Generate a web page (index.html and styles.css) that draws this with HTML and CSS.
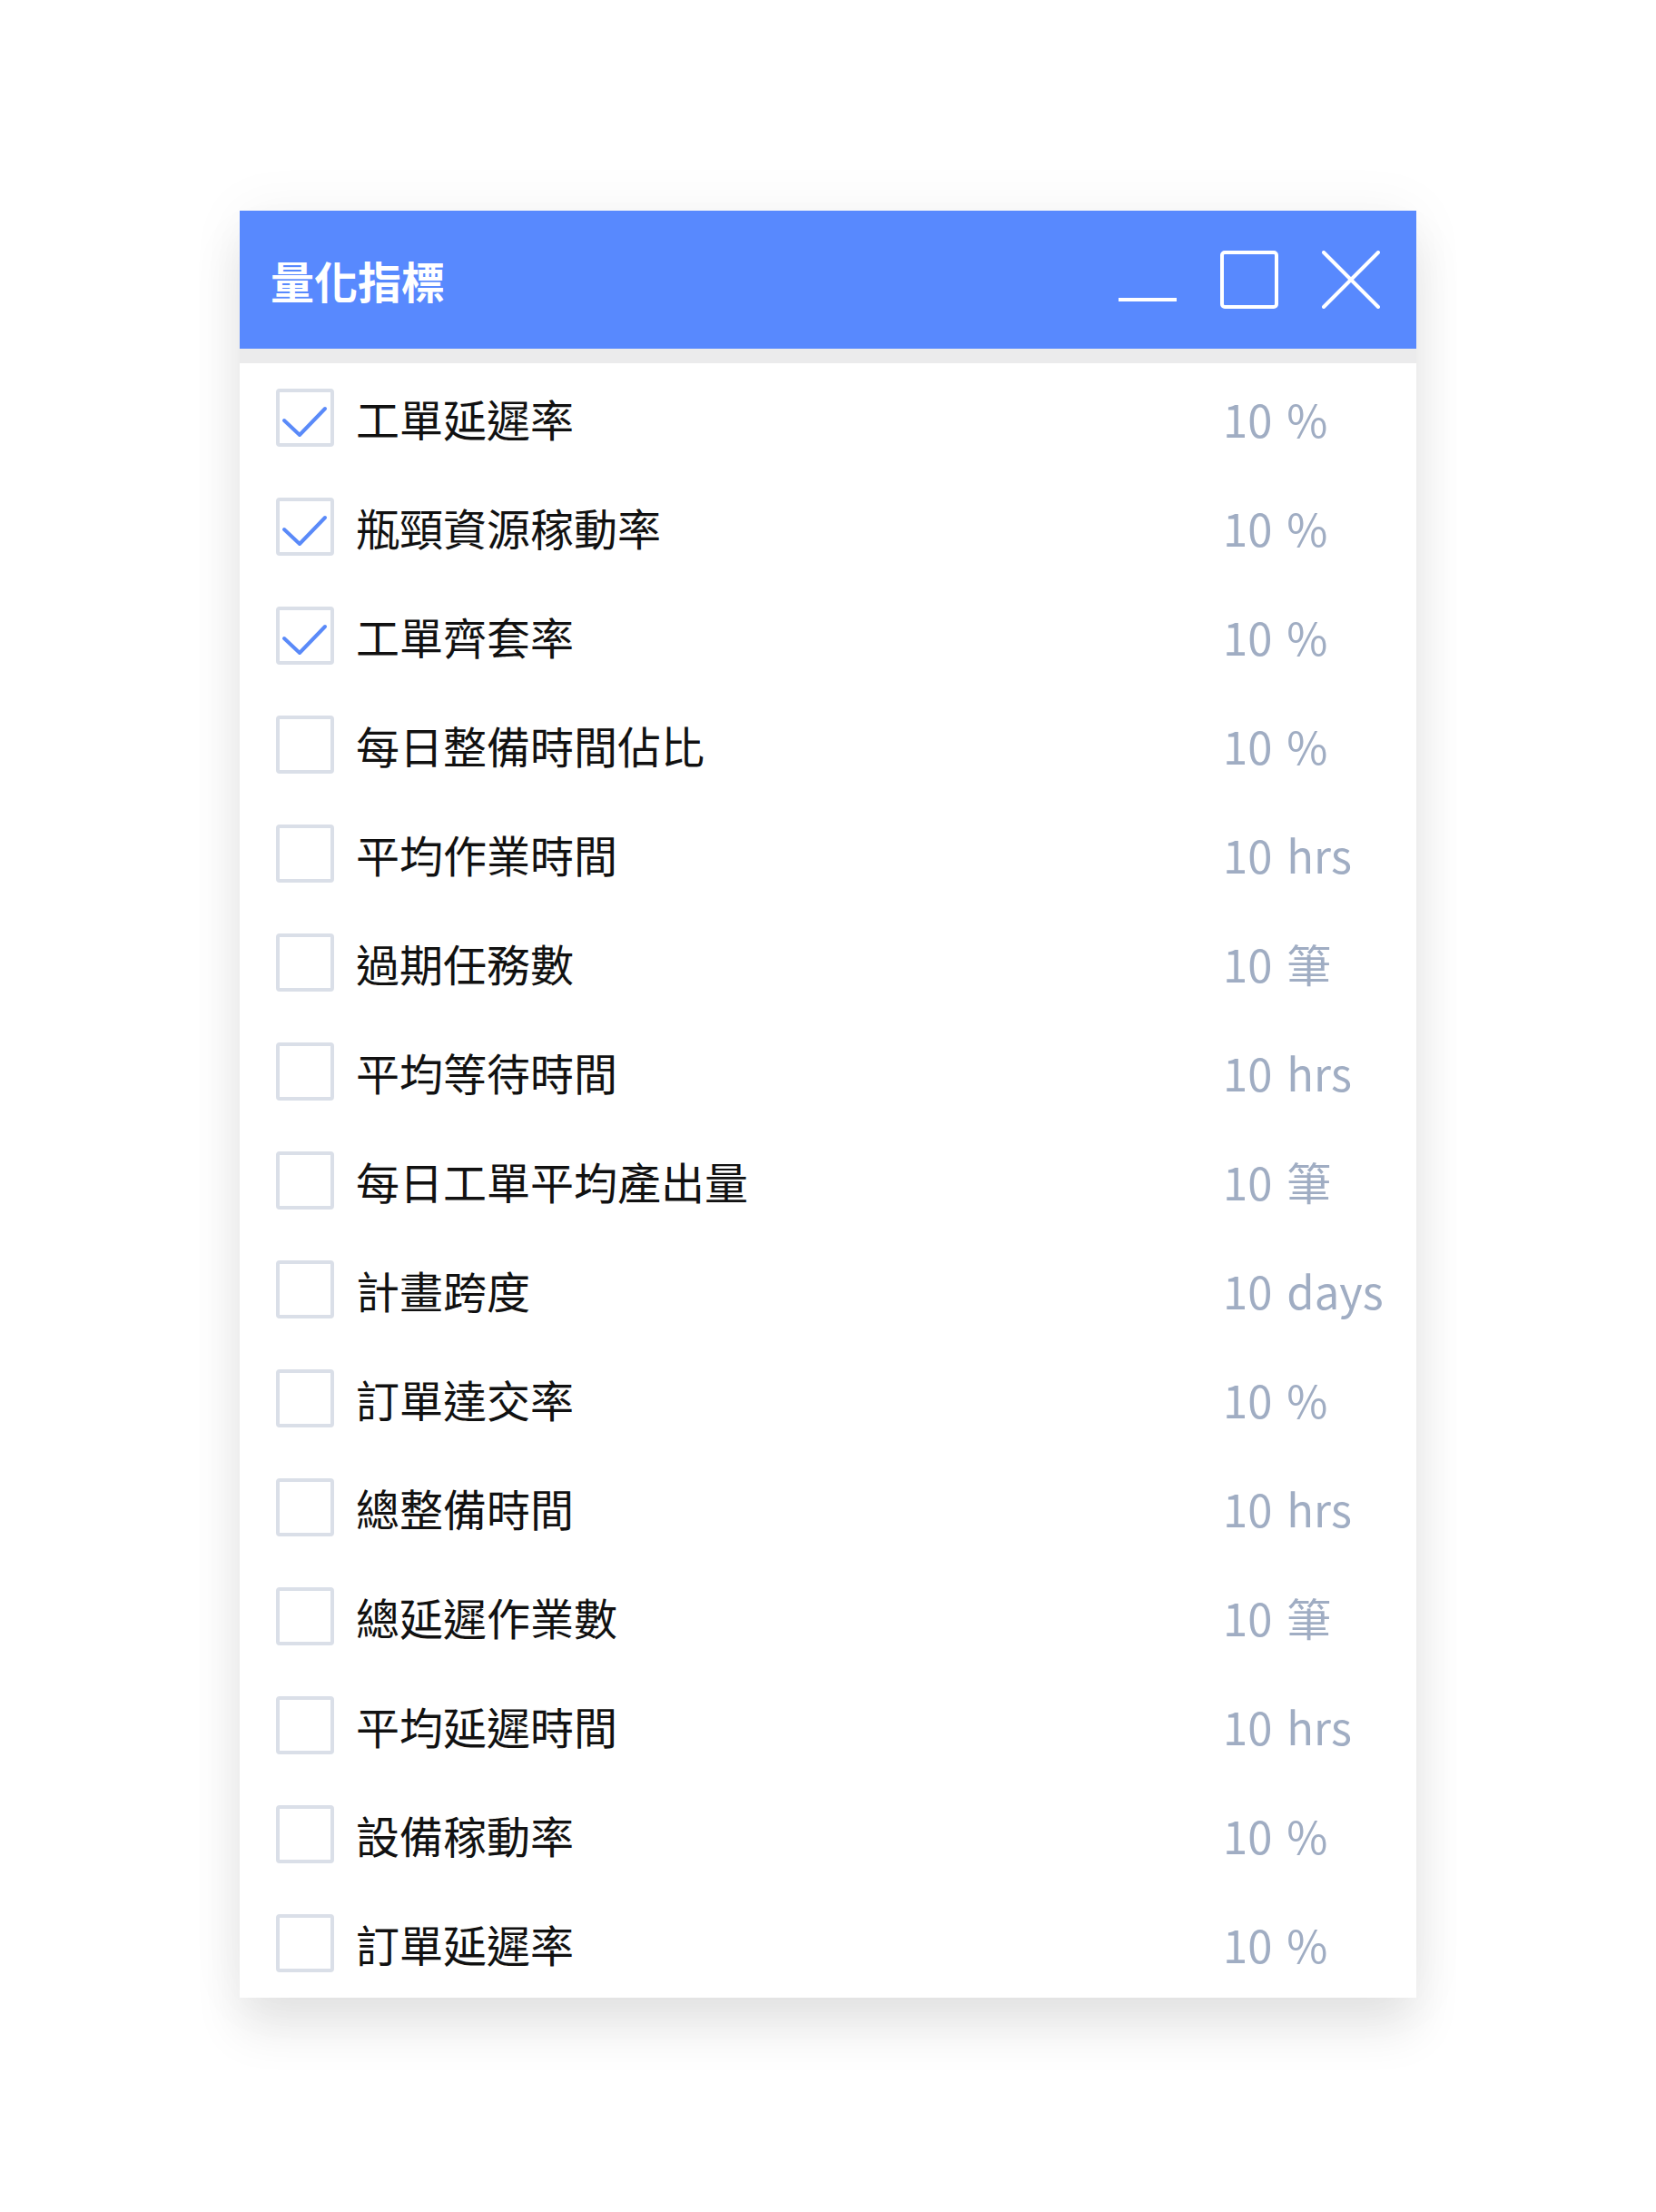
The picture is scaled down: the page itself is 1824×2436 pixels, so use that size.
FILE: index.html
```html
<!DOCTYPE html>
<html lang="zh-Hant">
<head>
  <meta charset="UTF-8" />
  <title>量化指標</title>
  <link rel="stylesheet" href="styles.css">
</head>
<body>
  <div class="window">
    <header class="titlebar">
      <h2>量化指標</h2>
      <div class="controls">
        <svg class="ctrl" viewBox="0 0 64 64"><line x1="0" y1="54" x2="64" y2="54" /></svg>
        <svg class="ctrl" viewBox="0 0 64 64"><rect x="2" y="2" width="60" height="60" rx="3" /></svg>
        <svg class="ctrl" viewBox="0 0 64 64"><line x1="2" y1="2" x2="62" y2="62" /><line x1="62" y1="2" x2="2" y2="62" /></svg>
      </div>
    </header>

    <ul class="metrics">
      <li class="checked"><span class="box"><svg viewBox="0 0 64 64"><polyline points="9,35 26,51 54,22" /></svg></span><span class="label">工單延遲率</span><span class="value">10 %</span></li>
      <li class="checked"><span class="box"><svg viewBox="0 0 64 64"><polyline points="9,35 26,51 54,22" /></svg></span><span class="label">瓶頸資源稼動率</span><span class="value">10 %</span></li>
      <li class="checked"><span class="box"><svg viewBox="0 0 64 64"><polyline points="9,35 26,51 54,22" /></svg></span><span class="label">工單齊套率</span><span class="value">10 %</span></li>
      <li><span class="box"></span><span class="label">每日整備時間佔比</span><span class="value">10 %</span></li>
      <li><span class="box"></span><span class="label">平均作業時間</span><span class="value">10 hrs</span></li>
      <li><span class="box"></span><span class="label">過期任務數</span><span class="value">10 筆</span></li>
      <li><span class="box"></span><span class="label">平均等待時間</span><span class="value">10 hrs</span></li>
      <li><span class="box"></span><span class="label">每日工單平均產出量</span><span class="value">10 筆</span></li>
      <li><span class="box"></span><span class="label">計畫跨度</span><span class="value">10 days</span></li>
      <li><span class="box"></span><span class="label">訂單達交率</span><span class="value">10 %</span></li>
      <li><span class="box"></span><span class="label">總整備時間</span><span class="value">10 hrs</span></li>
      <li><span class="box"></span><span class="label">總延遲作業數</span><span class="value">10 筆</span></li>
      <li><span class="box"></span><span class="label">平均延遲時間</span><span class="value">10 hrs</span></li>
      <li><span class="box"></span><span class="label">設備稼動率</span><span class="value">10 %</span></li>
      <li><span class="box"></span><span class="label">訂單延遲率</span><span class="value">10 %</span></li>
    </ul>
  </div>
</body>
</html>
```

FILE: styles.css
```css
body {
  margin: 0;
  padding: 0;
  min-height: 100vh;
  background-color: #fff;
  font-family: "Noto Sans CJK TC", "Noto Sans", sans-serif;
}

.window {
  width: 1296px;
  margin: 232px auto 0;
  background-color: #ebebec;
  box-shadow: 0 36px 50px rgba(0, 0, 0, 0.09), 0 0 60px rgba(0, 0, 0, 0.05);
}

.titlebar {
  height: 152px;
  background-color: #5889fe;
  display: flex;
  align-items: center;
  justify-content: space-between;
  padding: 0 40px 0 34px;
  box-sizing: border-box;
}

.titlebar h2 {
  margin: 0;
  color: #fff;
  font-size: 48px;
  font-weight: bold;
  line-height: 1;
}

.controls {
  display: flex;
  gap: 48px;
}

.ctrl {
  width: 64px;
  height: 64px;
  fill: none;
  stroke: #fff;
  stroke-width: 4;
  stroke-linecap: round;
}

.metrics {
  list-style: none;
  margin: 16px 0 0;
  padding: 0 0 0 40px;
  background-color: #fff;
}

.metrics li {
  height: 120px;
  display: grid;
  grid-template-columns: 64px 1fr 210px;
  column-gap: 24px;
  align-items: center;
}

.box {
  width: 64px;
  height: 64px;
  box-sizing: border-box;
  border: 4px solid #dadfe8;
  border-radius: 4px;
  position: relative;
}

.box svg {
  position: absolute;
  top: -4px;
  left: -4px;
  width: 64px;
  height: 64px;
  fill: none;
  stroke: #5a8af9;
  stroke-width: 4;
  stroke-linecap: round;
  stroke-linejoin: round;
}

.label {
  font-size: 48px;
  color: #111;
  line-height: 1;
}

.value {
  font-size: 49px;
  color: #a0adc3;
  line-height: 1;
  word-spacing: 5px;
  margin-left: -3px;
}
```
